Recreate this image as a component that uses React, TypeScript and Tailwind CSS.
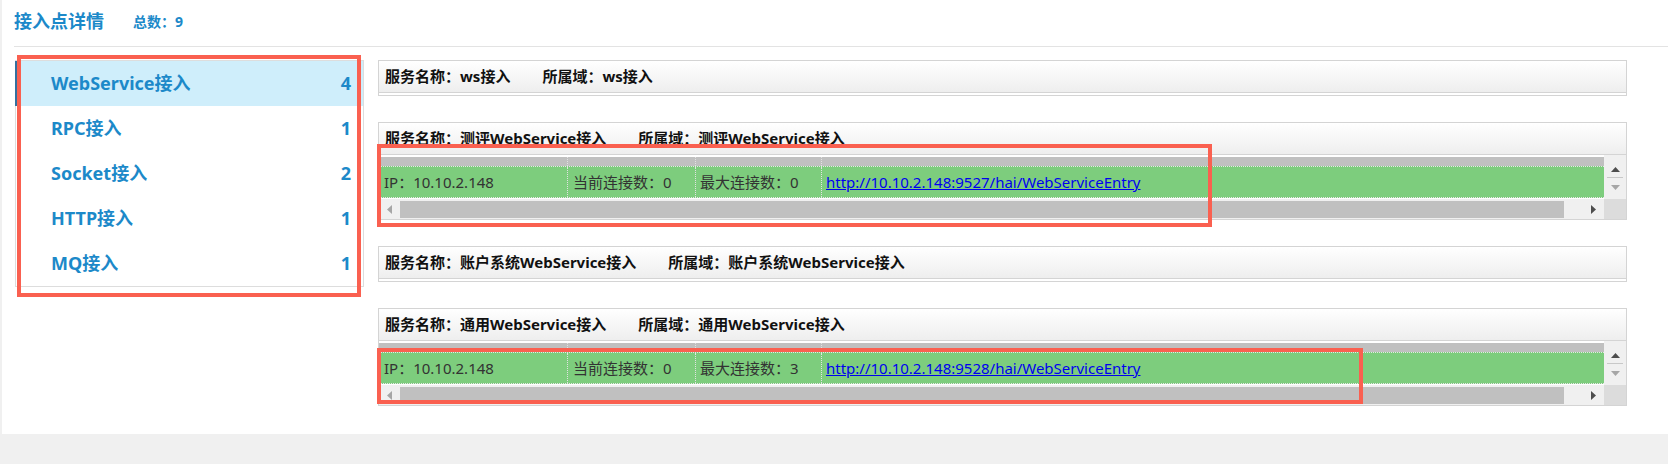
import React from 'react';

// --- data ---
const accessTypes = [
  { name: 'WebService接入', count: 4, active: true },
  { name: 'RPC接入', count: 1 },
  { name: 'Socket接入', count: 2 },
  { name: 'HTTP接入', count: 1 },
  { name: 'MQ接入', count: 1 },
];

interface Endpoint {
  ip: string;
  current: number;
  max: number;
  url: string;
}

interface Service {
  name: string;
  domain: string;
  endpoint?: Endpoint;
}

const services: Service[] = [
  { name: 'ws接入', domain: 'ws接入' },
  {
    name: '测评WebService接入',
    domain: '测评WebService接入',
    endpoint: { ip: '10.10.2.148', current: 0, max: 0, url: 'http://10.10.2.148:9527/hai/WebServiceEntry' },
  },
  { name: '账户系统WebService接入', domain: '账户系统WebService接入' },
  {
    name: '通用WebService接入',
    domain: '通用WebService接入',
    endpoint: { ip: '10.10.2.148', current: 0, max: 3, url: 'http://10.10.2.148:9528/hai/WebServiceEntry' },
  },
];

// --- tiny scrollbar arrows ---
const Tri: React.FC<{ dir: 'up' | 'down' | 'left' | 'right'; color: string }> = ({ dir, color }) => {
  if (dir === 'up' || dir === 'down') {
    return (
      <svg width="9" height="5" viewBox="0 0 9 5">
        <polygon points={dir === 'up' ? '4.5,0 9,5 0,5' : '0,0 9,0 4.5,5'} fill={color} />
      </svg>
    );
  }
  return (
    <svg width="5" height="9" viewBox="0 0 5 9">
      <polygon points={dir === 'left' ? '5,0 5,9 0,4.5' : '0,0 5,4.5 0,9'} fill={color} />
    </svg>
  );
};

// --- endpoint table with fake scrollbars ---
const EndpointTable: React.FC<{ ep: Endpoint }> = ({ ep }) => {
  const cell = 'h-full shrink-0 border-r border-dotted border-[#e2e2e2]';
  return (
    <div className="flex">
      <div className="min-w-0 flex-1">
        <div className="h-[2px]" />
        <div className="flex h-[9px] bg-[#c0c0c0]">
          <div className={`${cell} w-[189px]`} />
          <div className={`${cell} w-[128px]`} />
          <div className={`${cell} w-[126px]`} />
        </div>
        <div className="flex h-[32px] items-center border-y border-dotted border-[#e6e6e6] bg-[#7dcd7d] text-[15px] text-[#333]">
          <div className={`${cell} flex w-[189px] items-center pl-[5px]`}>IP：{ep.ip}</div>
          <div className={`${cell} flex w-[128px] items-center pl-[5px]`}>当前连接数：{ep.current}</div>
          <div className={`${cell} flex w-[126px] items-center pl-[4px]`}>最大连接数：{ep.max}</div>
          <div className="flex h-full items-center pl-[4px]">
            <a href="#" className="text-[#0000ee] underline">{ep.url}</a>
          </div>
        </div>
        <div className="h-px" />
        <div className="flex h-[20px] items-center bg-[#f0f0f0]">
          <div className="flex w-[21px] shrink-0 justify-center">
            <Tri dir="left" color="#a6a6a6" />
          </div>
          <div className="h-[17px] w-[1164px] shrink-0 bg-[#c0c0c0]" />
          <div className="flex-1" />
          <div className="flex w-[21px] shrink-0 justify-center">
            <Tri dir="right" color="#4d4d4d" />
          </div>
        </div>
      </div>
      <div className="flex w-[22px] shrink-0 flex-col">
        <div className="flex flex-1 flex-col items-center bg-[#f0f0f0]">
          <div className="mt-[12px] flex">
            <Tri dir="up" color="#4d4d4d" />
          </div>
          <div className="mt-[5px] h-px w-[16px] bg-[#c8c8c8]" />
          <div className="mt-[7px] flex">
            <Tri dir="down" color="#a6a6a6" />
          </div>
        </div>
        <div className="h-[20px] bg-[#dcdcdc]" />
      </div>
    </div>
  );
};

const ServicePanel: React.FC<{ svc: Service }> = ({ svc }) => (
  <div className="border border-[#d4d4d4] bg-white">
    <div className="flex h-[32px] items-center border-b border-[#d4d4d4] bg-gradient-to-b from-white to-[#eeeeee] px-[6px] text-[15px] font-bold text-[#111]">
      <span>服务名称：{svc.name}</span>
      <span className="ml-[32px]">所属域：{svc.domain}</span>
    </div>
    {svc.endpoint ? <EndpointTable ep={svc.endpoint} /> : <div className="h-[2px]" />}
  </div>
);

export default function App() {
  return (
    <div className="relative h-[464px] w-full bg-[#f0f0f0] pl-[2px] font-['Noto_Sans','Noto_Sans_CJK_SC',sans-serif]">
      <div className="h-[434px] bg-white">
        {/* header */}
        <div className="ml-[12px] flex h-[47px] items-center border-b border-[#e3e3e3] pb-[4px] text-[#1c89c9]">
          <span className="text-[18px] font-bold">接入点详情</span>
          <span className="ml-[29px] text-[14px] font-bold">总数：9</span>
        </div>

        <div className="mt-[13px] flex gap-[14px] pl-[13px] pr-[41px]">
          {/* access type menu */}
          <div className="h-[227px] w-[349px] shrink-0 border border-[#dddddd]">
            {accessTypes.map((t) => (
              <div
                key={t.name}
                className={`-ml-px flex h-[45px] items-center justify-between border-l-2 pl-[34px] pr-[12px] text-[18px] font-bold text-[#1c89c9] ${
                  t.active ? 'border-[#33709f] bg-[#cfeefb]' : 'border-transparent'
                }`}
              >
                <span>{t.name}</span>
                <span>{t.count}</span>
              </div>
            ))}
          </div>

          {/* service panels */}
          <div className="flex min-w-0 flex-1 flex-col gap-[26px]">
            {services.map((s) => (
              <ServicePanel key={s.name} svc={s} />
            ))}
          </div>
        </div>
      </div>

      {/* red annotation boxes */}
      <div className="absolute left-[17px] top-[55px] h-[242px] w-[344px] border-4 border-[#fa6050]" />
      <div className="absolute left-[377px] top-[144px] h-[83px] w-[835px] border-4 border-[#fa6050]" />
      <div className="absolute left-[377px] top-[348px] h-[56px] w-[986px] border-4 border-[#fa6050]" />
    </div>
  );
}
